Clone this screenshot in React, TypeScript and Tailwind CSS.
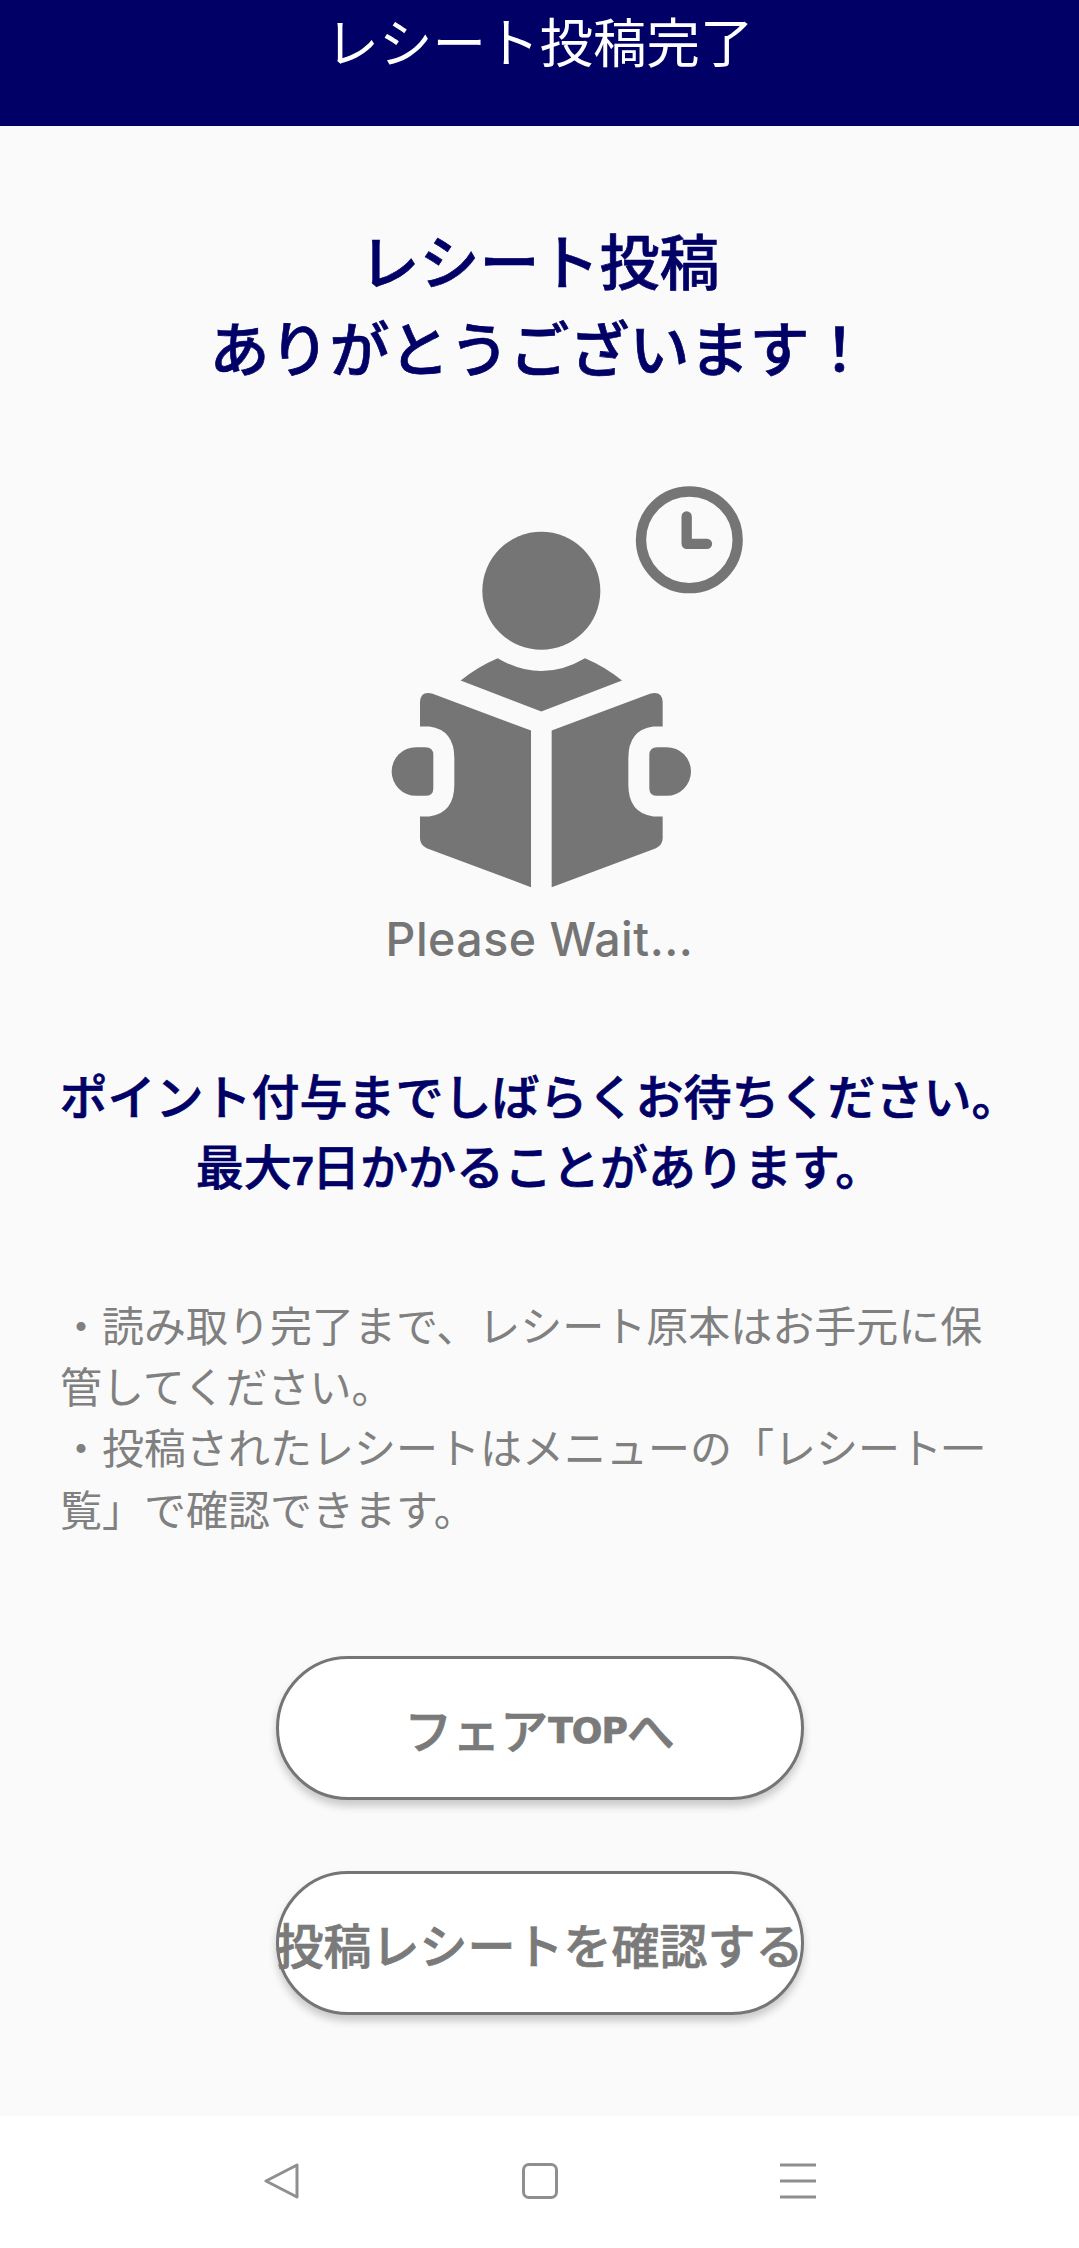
const jpFont = "font-['Noto_Sans_CJK_JP',sans-serif]";

function ReadingIcon() {
  return (
    <svg viewBox="140 70 1080 1220" className="w-[360px] h-[407px]" fill="#757575">
      <circle cx="1050" cy="240" r="145" fill="none" stroke="#757575" strokeWidth="31" />
      <path d="M1042 170V252H1103" fill="none" stroke="#757575" strokeWidth="31" strokeLinecap="round" strokeLinejoin="round" />
      <circle cx="606" cy="393" r="177" />
      <path d="M475 595Q606 672 737 595Q800 622 848 662L606 755L364 662Q412 622 475 595Z" />
      <path d="M575 812V1282L262 1165Q242 1155 242 1135V1070H270Q345 1060 345 975V895Q345 810 270 800H242V725Q245 692 280 702Z" />
      <path d="M637 812V1282L950 1165Q970 1155 970 1135V1070H942Q867 1060 867 975V895Q867 810 942 800H970V725Q967 692 932 702Z" />
      <path d="M282 885Q282 862 258 862H230A73 73 0 0 0 230 1008H258Q282 1008 282 985Z" />
      <path d="M930 885Q930 862 954 862H982A73 73 0 0 1 982 1008H954Q930 1008 930 985Z" />
    </svg>
  );
}

function PillButton({ children }: { children: React.ReactNode }) {
  return (
    <button
      type="button"
      className="w-[528px] h-[144px] rounded-full border-[3px] border-[#757575] bg-white text-[#7a7a7a] text-[48px] font-medium [-webkit-text-stroke:0.7px] flex items-center justify-center whitespace-nowrap shadow-[0_6px_8px_rgba(0,0,0,0.2)]"
    >
      {children}
    </button>
  );
}

export default function App() {
  return (
    <div className={`w-[1079px] h-[2248px] flex flex-col bg-[#fafafa] overflow-hidden ${jpFont}`}>
      <header className="h-[126px] shrink-0 bg-[#000066] flex justify-center">
        <h1 className="text-white text-[53.5px] leading-[80px] font-normal">レシート投稿完了</h1>
      </header>

      <main className="flex-1 flex flex-col items-center">
        <h2 className="mt-[89px] text-[#000066] text-[60px] leading-[87px] font-medium [-webkit-text-stroke:0.7px] text-center">
          レシート投稿
          <br />
          ありがとうございます！
        </h2>

        <div className="mt-[94px] w-full flex flex-col items-center">
          <div className="ml-[52px]">
            <ReadingIcon />
          </div>
          <p className="font-['Inter',sans-serif] font-medium text-[#757575] text-[46.5px] leading-[60px] tracking-[0.5px] mt-[19px]">
            Please Wait...
          </p>
        </div>

        <p className="mt-[90px] text-[#000066] text-[48px] leading-[70px] font-medium [-webkit-text-stroke:0.7px] text-center whitespace-nowrap">
          ポイント付与までしばらくお待ちください。
          <br />
          最大<span className="font-['Liberation_Sans',sans-serif] font-bold text-[40px] tracking-[-4px] pr-[2px]">7</span>日かかることがあります。
        </p>

        <div className="mt-[87px] w-full px-[60px] text-[#808080] text-[42px] leading-[61.2px]">
          <p>・読み取り完了まで、レシート原本はお手元に保管してください。</p>
          <p>・投稿されたレシートはメニューの「レシート一覧」で確認できます。</p>
        </div>

        <div className="mt-[118px] flex flex-col items-center gap-[71px]">
          <PillButton>
            フェア<span className="font-['DejaVu_Sans',sans-serif] font-bold text-[36px] tracking-[-1px] pt-[6px]">TOP</span>へ
          </PillButton>
          <PillButton>投稿レシートを確認する</PillButton>
        </div>
      </main>

      <nav className="h-[132px] shrink-0 bg-white flex items-center justify-center gap-[222px] pb-[2px]">
        <svg width="36" height="36" viewBox="0 0 36 36" fill="none" stroke="#8f8f8f" strokeWidth="3" strokeLinejoin="round">
          <path d="M33 2V34L2 18Z" />
        </svg>
        <div className="w-[36px] h-[36px] rounded-[7px] border-[3px] border-[#8f8f8f]" />
        <svg width="36" height="36" viewBox="0 0 36 36" stroke="#8f8f8f" strokeWidth="3">
          <path d="M0 2H36M0 18H36M0 34H36" />
        </svg>
      </nav>
    </div>
  );
}
